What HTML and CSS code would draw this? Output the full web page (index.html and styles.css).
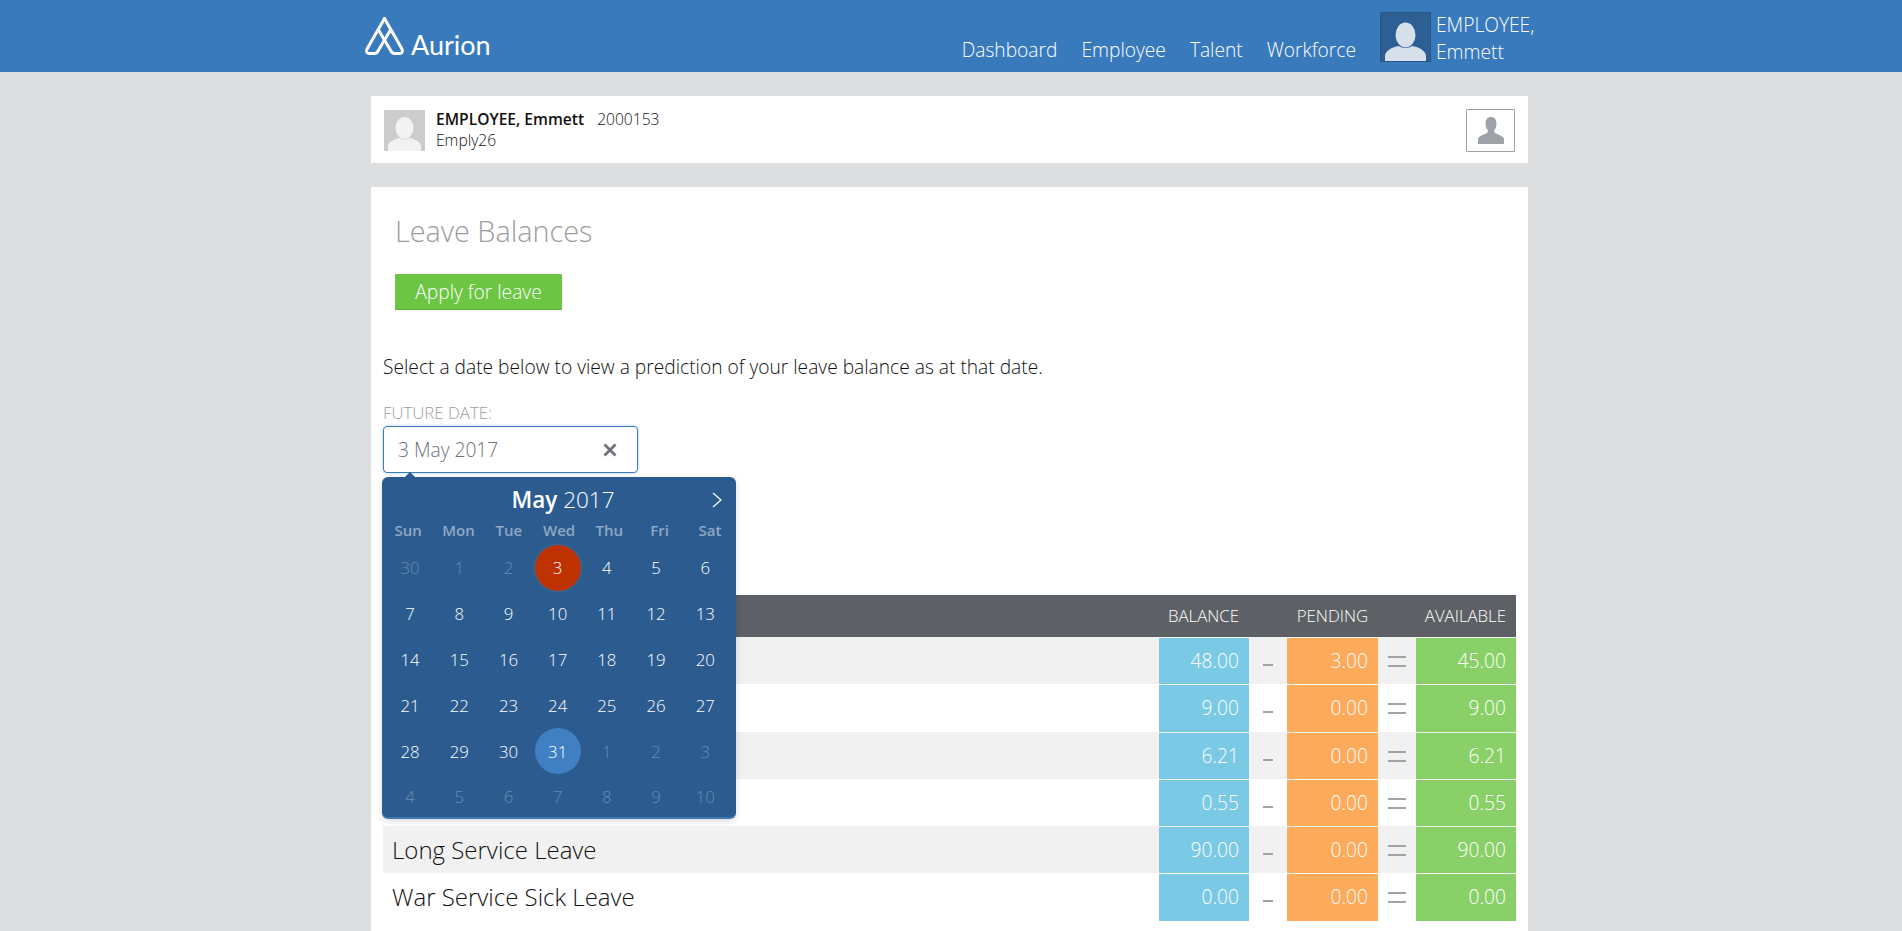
FILE: index.html
```html
<!DOCTYPE html>
<html lang="en">
<head>
    <meta charset="UTF-8">
    <title>Leave Balances</title>
    <link rel="stylesheet" href="styles.css">
</head>
<body>
    <header class="topbar">
        <div class="topbar-inner">
            <a class="logo" href="#">
                <svg class="logo-mark" viewBox="0 0 40 40" width="40" height="40" fill="none" stroke="#fff" stroke-width="3" stroke-linejoin="round" stroke-linecap="round">
                    <path d="M19.500 2.500 L37 33 Q38.500 37.500 34.500 37.500 L29.500 37.500 Q27.300 37.500 26 35 L13.500 14"/>
                    <path d="M19.500 2.500 L2 33 Q.5 37.500 4.500 37.500 L9.500 37.500 Q11.700 37.500 13 35 L25.500 14"/>
                </svg>
                <span class="logo-text">Aurion</span>
            </a>
            <nav class="mainnav">
                <a href="#">Dashboard</a>
                <a href="#">Employee</a>
                <a href="#">Talent</a>
                <a href="#">Workforce</a>
            </nav>
            <div class="usermenu">
                <div class="usermenu-pic">
                    <svg viewBox="0 0 51 50" width="51" height="50" fill="#d6e0eb"><ellipse cx="25.500" cy="23" rx="10" ry="12.500"/><path d="M5 50v-6c0-5 7-9 14-10 2 1.500 4 2 6.500 2s4.500-.5 6.500-2c7 1 14 5 14 10v6z"/></svg>
                </div>
                <div class="usermenu-name">EMPLOYEE,<br>Emmett</div>
            </div>
        </div>
    </header>

    <main class="page">
        <section class="panel empbar">
            <div class="empbar-pic">
                <svg viewBox="0 0 41 41" width="41" height="41" fill="#f2f2f2"><ellipse cx="20.500" cy="18" rx="9" ry="11"/><path d="M4 41v-5c0-4 6-7 12-8 1.500 1 3 1.500 4.500 1.500s3-.5 4.500-1.500c6 1 12 4 12 8v5z"/></svg>
            </div>
            <div class="empbar-info">
                <div><strong>EMPLOYEE, Emmett</strong><span class="empbar-id">2000153</span></div>
                <div>Emply26</div>
            </div>
            <button class="empbar-btn">
                <svg viewBox="0 0 30 30" width="30" height="30"><path fill="#9ea2a6" d="M15 2c3.500 0 5.500 2.500 5.500 6.500 0 3-1 5.500-2.500 7 0 1.500.5 2.500 3 3.500 4 1.500 7 3 7 5.500V29H2v-4.500C2 22 5 20.500 9 19c2.500-1 3-2 3-3.500-1.500-1.500-2.500-4-2.500-7C9.500 4.500 11.500 2 15 2z"/></svg>
            </button>
        </section>

        <section class="panel balances">
            <h1 class="title">Leave Balances</h1>
            <button class="btn-apply">Apply for leave</button>
            <p class="intro">Select a date below to view a prediction of your leave balance as at that date.</p>

            <div class="datefield">
                <label class="datefield-label">FUTURE DATE:</label>
                <div class="datefield-input">
                    <span>3 May 2017</span>
                    <svg viewBox="0 0 14 14" width="14" height="14" stroke="#6b7177" stroke-width="2.800" fill="none"><path d="M1.500 1.500l11 11M12.500 1.500l-11 11"/></svg>
                </div>

                <div class="calendar">
                    <div class="calendar-head">
                        <span class="calendar-title"><b>May</b> 2017</span>
                        <svg class="calendar-next" viewBox="0 0 12 18" width="12" height="18" fill="none" stroke="#fff" stroke-width="1.200"><path d="M2 2l8 7-8 7"/></svg>
                    </div>
                    <div class="calendar-dows">
                        <span>Sun</span><span>Mon</span><span>Tue</span><span>Wed</span><span>Thu</span><span>Fri</span><span>Sat</span>
                    </div>
                    <div class="calendar-days">
                        <span class="day off">30</span><span class="day off">1</span><span class="day off">2</span><span class="day selected">3</span><span class="day">4</span><span class="day">5</span><span class="day">6</span>
                        <span class="day">7</span><span class="day">8</span><span class="day">9</span><span class="day">10</span><span class="day">11</span><span class="day">12</span><span class="day">13</span>
                        <span class="day">14</span><span class="day">15</span><span class="day">16</span><span class="day">17</span><span class="day">18</span><span class="day">19</span><span class="day">20</span>
                        <span class="day">21</span><span class="day">22</span><span class="day">23</span><span class="day">24</span><span class="day">25</span><span class="day">26</span><span class="day">27</span>
                        <span class="day">28</span><span class="day">29</span><span class="day">30</span><span class="day today">31</span><span class="day off">1</span><span class="day off">2</span><span class="day off">3</span>
                        <span class="day off">4</span><span class="day off">5</span><span class="day off">6</span><span class="day off">7</span><span class="day off">8</span><span class="day off">9</span><span class="day off">10</span>
                    </div>
                </div>
            </div>

            <div class="ltable">
                <div class="lrow lhead">
                    <span class="lname"></span>
                    <span class="lcell">BALANCE</span><span class="lop"></span>
                    <span class="lcell center">PENDING</span><span class="lop"></span>
                    <span class="lcell">AVAILABLE</span>
                </div>
                <div class="lrow">
                    <span class="lname"></span>
                    <span class="lcell bal">48.00</span><span class="lop minus"></span>
                    <span class="lcell pen">3.00</span><span class="lop equals"></span>
                    <span class="lcell ava">45.00</span>
                </div>
                <div class="lrow">
                    <span class="lname"></span>
                    <span class="lcell bal">9.00</span><span class="lop minus"></span>
                    <span class="lcell pen">0.00</span><span class="lop equals"></span>
                    <span class="lcell ava">9.00</span>
                </div>
                <div class="lrow">
                    <span class="lname"></span>
                    <span class="lcell bal">6.21</span><span class="lop minus"></span>
                    <span class="lcell pen">0.00</span><span class="lop equals"></span>
                    <span class="lcell ava">6.21</span>
                </div>
                <div class="lrow">
                    <span class="lname"></span>
                    <span class="lcell bal">0.55</span><span class="lop minus"></span>
                    <span class="lcell pen">0.00</span><span class="lop equals"></span>
                    <span class="lcell ava">0.55</span>
                </div>
                <div class="lrow">
                    <span class="lname">Long Service Leave</span>
                    <span class="lcell bal">90.00</span><span class="lop minus"></span>
                    <span class="lcell pen">0.00</span><span class="lop equals"></span>
                    <span class="lcell ava">90.00</span>
                </div>
                <div class="lrow">
                    <span class="lname">War Service Sick Leave</span>
                    <span class="lcell bal">0.00</span><span class="lop minus"></span>
                    <span class="lcell pen">0.00</span><span class="lop equals"></span>
                    <span class="lcell ava">0.00</span>
                </div>
            </div>
        </section>
    </main>
</body>
</html>
```

FILE: styles.css
```css
html, body {
    height: 100%;
    overflow: hidden;
}
body {
    margin: 0;
    background-color: #dcdee0;
    font-family: "Open Sans", Arial, sans-serif;
    font-weight: 300;
    color: #111;
}
a {
    color: inherit;
    text-decoration: none;
}

/* top bar */
.topbar {
    height: 72px;
    background-color: #397abc;
    color: #fff;
}
.topbar-inner {
    width: 1157px;
    height: 72px;
    margin-left: 371px;
    display: flex;
    align-items: flex-end;
}
.logo {
    display: flex;
    align-items: flex-end;
    margin-left: -6px;
    padding-bottom: 16px;
    margin-right: auto;
}
.logo-mark {
    display: block;
}
.logo-text {
    font-family: "Lato", sans-serif;
    font-weight: 400;
    font-size: 27px;
    line-height: 26px;
    margin-left: 6px;
    margin-bottom: -2px;
}
.mainnav {
    display: flex;
    gap: 24px;
    font-size: 19.200px;
    line-height: 24px;
    padding-bottom: 10px;
    margin-right: 24px;
}
.usermenu {
    display: flex;
    align-items: flex-end;
    width: 160px;
    margin-right: -12px;
    padding-bottom: 10px;
}
.usermenu-pic {
    width: 51px;
    height: 50px;
    flex: none;
    background-color: #2d5f95;
    outline: 1px solid #2a5580;
    outline-offset: -1px;
    overflow: hidden;
}
.usermenu-pic svg {
    display: block;
}
.usermenu-name {
    font-size: 19.200px;
    line-height: 27px;
    margin-left: 5px;
    margin-bottom: -3px;
    white-space: nowrap;
}

/* page */
.page {
    width: 1157px;
    margin: 24px 0 0 371px;
}
.panel {
    background-color: #fff;
}
.empbar {
    height: 67px;
    box-sizing: border-box;
    padding: 13px 13px 12px;
    display: flex;
    align-items: center;
    margin-bottom: 24px;
}
.empbar-pic {
    width: 41px;
    height: 41px;
    background-color: #cccccc;
    margin-right: 11px;
    overflow: hidden;
}
.empbar-pic svg {
    display: block;
}
.empbar-info {
    flex: 1;
    font-size: 15.600px;
    line-height: 21px;
}
.empbar-info strong {
    font-weight: 600;
}
.empbar-id {
    margin-left: 13px;
}
.empbar-btn {
    width: 49px;
    height: 43px;
    box-sizing: border-box;
    padding: 0;
    background-color: #fff;
    border: 1px solid #9ea2a6;
    border-radius: 1px;
    display: flex;
    align-items: center;
    justify-content: center;
}

.balances {
    height: 800px;
    padding: 0 12px;
    box-sizing: border-box;
}
.title {
    margin: 0;
    padding: 25px 0 0 12px;
    font-size: 28.800px;
    font-weight: 300;
    line-height: 38px;
    color: #9a9da0;
}
.btn-apply {
    display: block;
    margin: 24px 0 0 12px;
    width: 167px;
    height: 36px;
    padding: 0;
    border: 0;
    border-bottom: 1px solid #5fb038;
    border-radius: 1px;
    background-color: #6cc644;
    color: #fff;
    font-family: inherit;
    font-weight: 300;
    font-size: 19.200px;
}
.intro {
    margin: 43px 0 0;
    font-size: 19.200px;
    line-height: 28px;
    font-weight: 300;
}

/* date picker */
.datefield {
    position: relative;
    margin-top: 22px;
    height: 192px;
}
.datefield-label {
    display: block;
    font-size: 16.800px;
    line-height: 20px;
    color: #9a9da0;
}
.datefield-input {
    width: 255px;
    height: 47px;
    margin-top: 3px;
    box-sizing: border-box;
    padding: 0 20px 0 14px;
    border: 1px solid #397abc;
    border-radius: 4px;
    box-shadow: 0 0 3px rgba(57, 122, 188, 0.4);
    display: flex;
    align-items: center;
    justify-content: space-between;
    font-size: 19.200px;
    color: #6b7177;
}
.calendar {
    position: absolute;
    top: 74px;
    left: -1px;
    z-index: 10;
    width: 354px;
    height: 342px;
    box-sizing: border-box;
    background-color: #2c5c8f;
    border-bottom: 2px solid #3f79b4;
    border-radius: 6px;
    box-shadow: 0 2px 6px rgba(0, 0, 0, 0.15);
    color: #fff;
}
.calendar::before {
    content: "";
    position: absolute;
    top: -5px;
    left: 22px;
    border-left: 6px solid transparent;
    border-right: 6px solid transparent;
    border-bottom: 6px solid #2c5c8f;
}
.calendar-head {
    height: 44px;
    display: flex;
    align-items: center;
    justify-content: center;
    position: relative;
}
.calendar-title {
    font-size: 22.500px;
    font-weight: 300;
    position: relative;
    left: 4px;
}
.calendar-title b {
    font-weight: 600;
}
.calendar-next {
    position: absolute;
    right: 13px;
    top: 14px;
}
.calendar-dows {
    display: grid;
    grid-template-columns: repeat(7, 50.300px);
    height: 18px;
    line-height: 18px;
    margin: 0 0 6px 1px;
    text-align: center;
    font-size: 15px;
    font-weight: 600;
    color: #8fa8c4;
}
.calendar-days {
    display: grid;
    grid-template-columns: repeat(7, 49.200px);
    grid-auto-rows: 45.800px;
    margin-left: 3.500px;
    justify-items: center;
    align-items: center;
}
.day {
    width: 46px;
    height: 46px;
    border-radius: 50%;
    display: flex;
    align-items: center;
    justify-content: center;
    font-size: 16.800px;
    font-weight: 300;
}
.day.off {
    color: #6b8cb0;
}
.day.selected {
    background-color: #bd3200;
    box-shadow: 0 0 2px rgba(255, 255, 255, 0.2);
}
.day.today {
    background-color: #4080c2;
}

/* leave table */
.lrow {
    display: grid;
    grid-template-columns: 1fr 90px 38px 91px 38px 100px;
    height: 47.300px;
    font-size: 24px;
}
.lrow:nth-child(even) {
    background-color: #f1f1f1;
}
.lrow .lname {
    padding-left: 9px;
    line-height: 47px;
}
.lhead {
    height: 42px;
    background-color: #5d6166;
    color: #fff;
}
.lcell {
    text-align: right;
    padding-right: 10px;
    font-size: 19.200px;
    line-height: 46px;
    color: #fff;
}
.lhead .lcell {
    font-size: 16.800px;
    line-height: 42px;
}
.lhead .lcell.center {
    text-align: center;
    padding-right: 0;
}
.lcell.bal {
    background-color: #7ac9e5;
}
.lcell.pen {
    background-color: #fdaa5a;
}
.lcell.ava {
    background-color: #8ad068;
}
.lrow:not(.lhead) .lcell {
    margin-top: 1px;
}
.lop {
    position: relative;
}
.lop.minus::before {
    content: "";
    position: absolute;
    left: 14px;
    top: 27px;
    width: 10px;
    height: 2px;
    background-color: #a0a4a8;
}
.lop.equals::before {
    content: "";
    position: absolute;
    left: 10px;
    top: 19px;
    width: 18px;
    height: 7px;
    border-top: 2px solid #a0a4a8;
    border-bottom: 2px solid #a0a4a8;
}
```
